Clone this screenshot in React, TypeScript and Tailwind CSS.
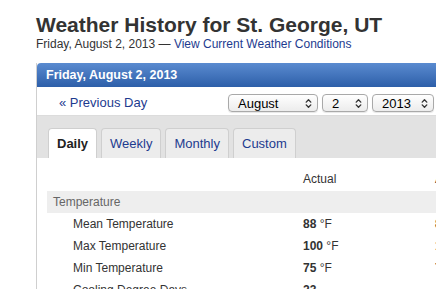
import { ChevronsUpDown } from "lucide-react";

const rows = [
	{ label: "Mean Temperature", actual: "88", avg: "84" },
	{ label: "Max Temperature", actual: "100", avg: "101" },
	{ label: "Min Temperature", actual: "75", avg: "72" },
	{ label: "Cooling Degree Days", actual: "23", avg: "" },
];

function Select({ value, width }: { value: string; width: string }) {
	return (
		<div
			className={`flex h-[18px] items-center justify-between rounded-[4px] border border-[#a9a9a9] bg-gradient-to-b from-white to-[#ececec] pr-[3px] pl-[9px] text-[13px] text-black shadow-[0_1px_1px_rgba(0,0,0,0.1)] ${width}`}
		>
			<span className="leading-none">{value}</span>
			<ChevronsUpDown className="h-[11px] w-[11px] text-[#333]" strokeWidth={3} />
		</div>
	);
}

export default function App() {
	const tabs = ["Daily", "Weekly", "Monthly", "Custom"];

	return (
		<div className="h-[289px] w-[436px] overflow-hidden bg-white font-['Liberation_Sans',Arial,sans-serif]">
			<div className="pt-[15px] pl-9">
				<h1 className="text-[21px] leading-[20px] font-bold text-[#333]">
					Weather History for St. George, UT
				</h1>
				<p className="mt-[2px] text-[12px] leading-[14px] text-[#333]">
					Friday, August 2, 2013 —{" "}
					<span className="text-[#1d3b8f]">View Current Weather Conditions</span>
				</p>

				<div className="mt-[12px] w-[460px] border-l border-[#cfcfcf]">
					<div className="flex h-[24px] items-center rounded-tl-[4px] bg-gradient-to-b from-[#5a8bd0] to-[#2d5fa9] pl-[9px] text-[12.5px] font-bold text-white">
						Friday, August 2, 2013
					</div>
					<div className="flex h-[29px] items-center justify-between border-b border-[#dcdcdc] pt-[4px] pr-[62px] pl-[22px]">
						<span className="text-[13px] text-[#1d3b8f]">« Previous Day</span>
						<div className="flex gap-[4px]">
							<Select value="August" width="w-[90px]" />
							<Select value="2" width="w-[46px]" />
							<Select value="2013" width="w-[62px]" />
						</div>
					</div>
					<div className="flex gap-[4px] bg-[#e2e2e2] pt-[12px] pl-[11px]">
						{tabs.map((t, i) => (
							<div
								key={t}
								className={
									i === 0
										? "flex h-[30px] items-center rounded-t-[4px] border border-b-0 border-[#cfcfcf] bg-white px-[8px] text-[13px] font-bold text-[#222]"
										: "flex h-[30px] items-center rounded-t-[4px] border border-b-0 border-[#cfcfcf] bg-[#ececec] px-[8px] text-[13px] text-[#1d3b8f]"
								}
							>
								{t}
							</div>
						))}
					</div>
					<div className="pt-[11px] text-[12px] text-[#333]">
						<div className="flex h-[20px] items-center">
							<span className="w-[266px]" />
							<span className="w-[132px]">Actual</span>
							<span>Average</span>
						</div>
						<div className="mt-[2px] ml-[10px] flex h-[22px] items-center bg-[#eeeeee] pl-[6px] text-[#666]">
							Temperature
						</div>
						<div>
							{rows.map((r) => (
								<div key={r.label} className="flex h-[22px] items-center">
									<span className="w-[266px] pl-[36px]">{r.label}</span>
									<span className="w-[132px]">
										<b>{r.actual}</b>
										{r.label.startsWith("Cooling") ? "" : " °F"}
									</span>
									<span>
										<b>{r.avg}</b>
										{r.avg ? " °F" : ""}
									</span>
								</div>
							))}
						</div>
					</div>
				</div>
			</div>
		</div>
	);
}
